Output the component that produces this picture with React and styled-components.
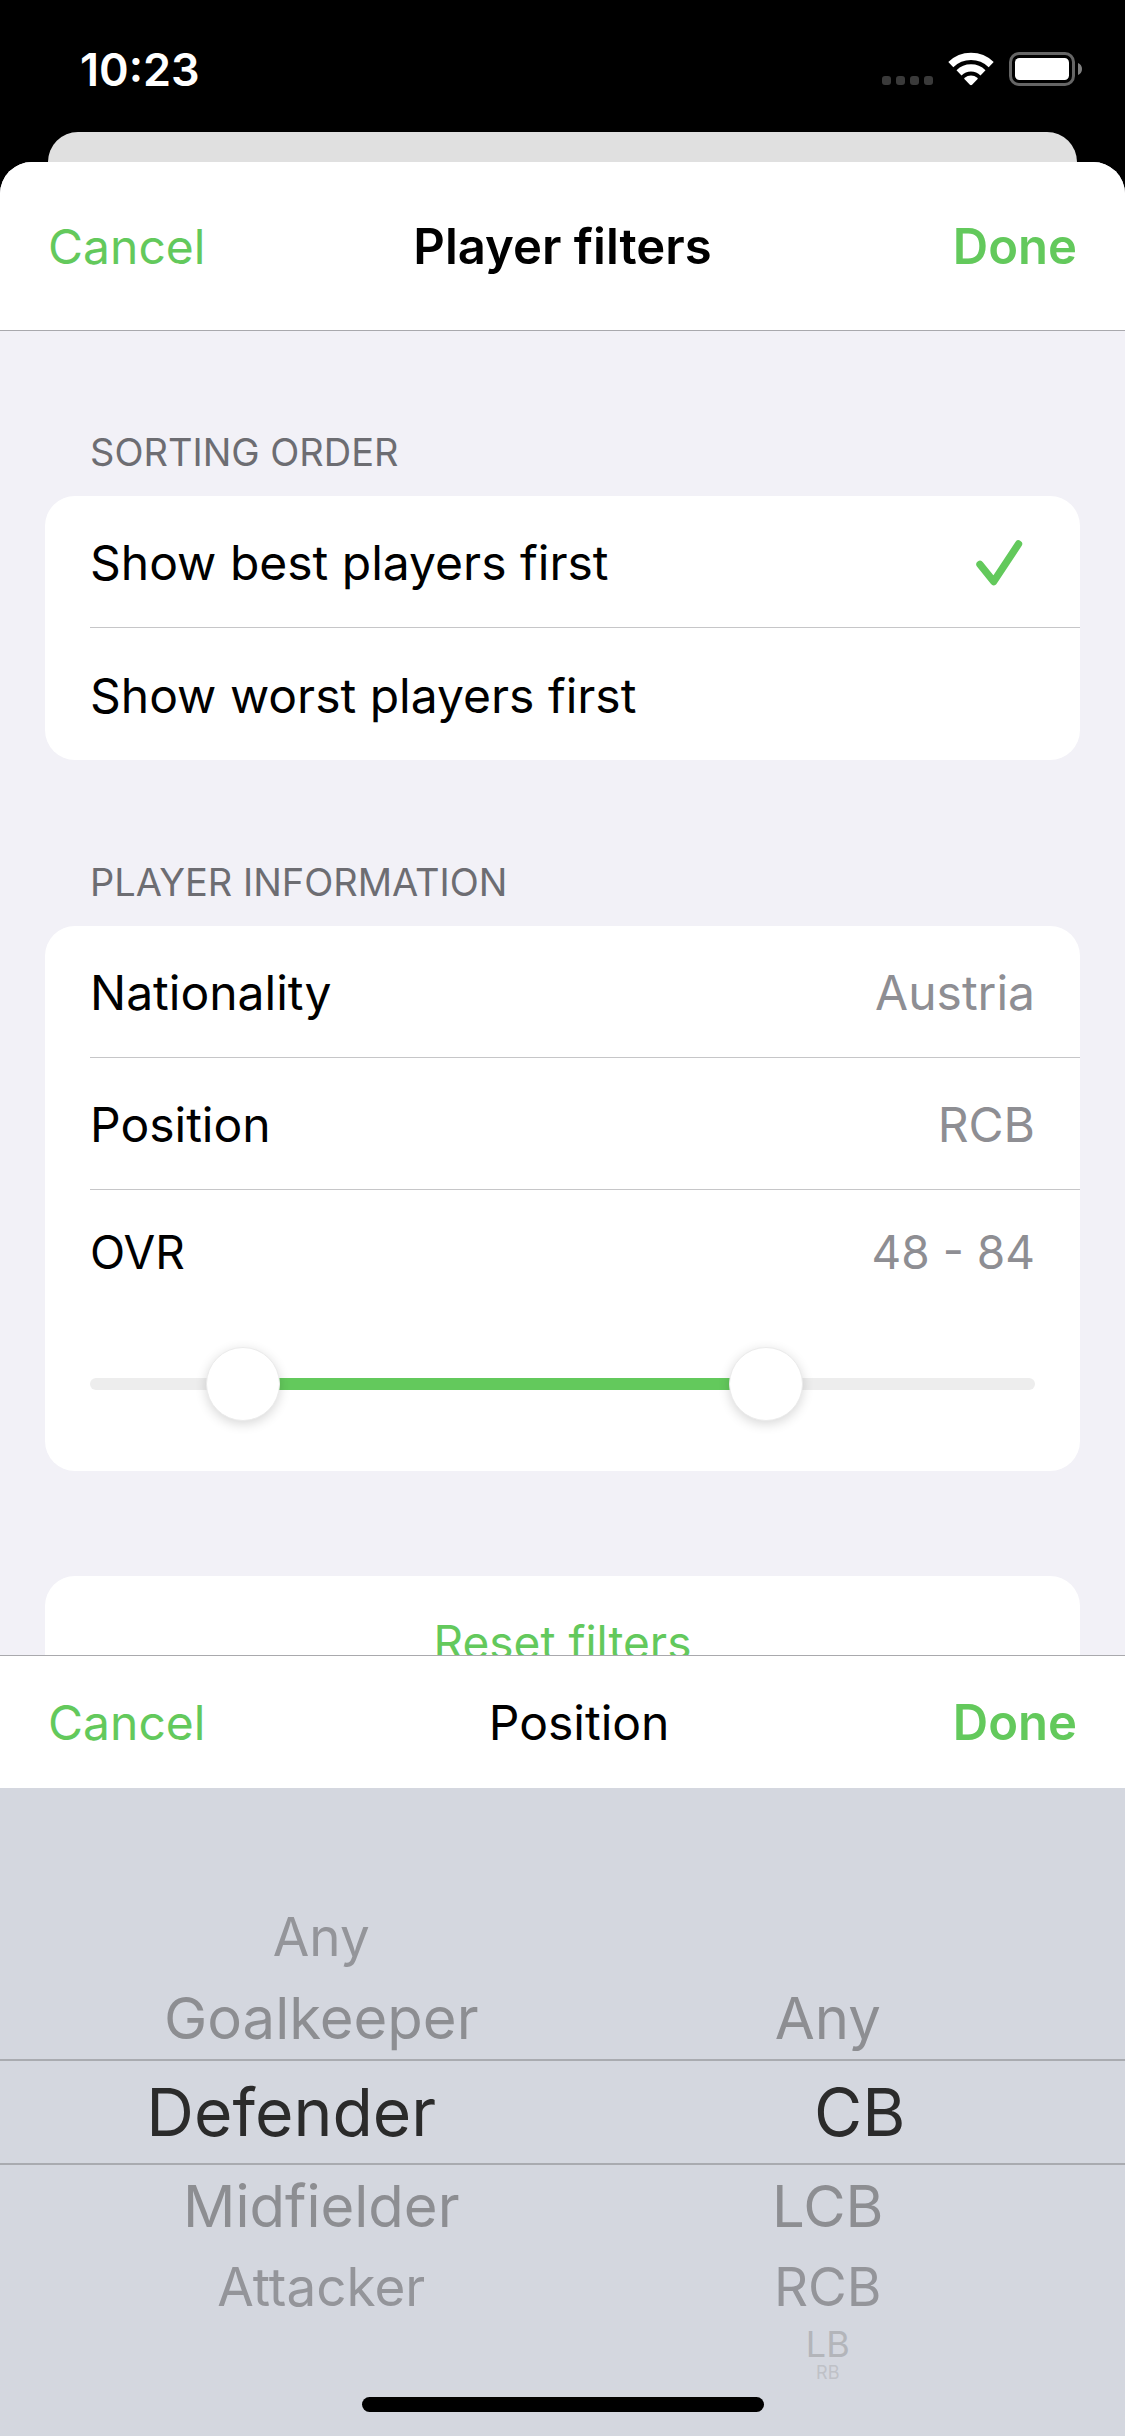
import React, { useState } from "react";
import styled, { createGlobalStyle, css } from "styled-components";

const color = {
  green: "#63c95c",
  ink: "#000",
  label: "#6d6d72",
  value: "#8e8e93",
  separator: "#c6c6c8",
  barLine: "#a9a9ad",
  grouped: "#f2f1f7",
  picker: "#d4d7df",
  pickerLine: "#a9abb0",
};

const size = { section: 38, small: 46, body: 48, strong: 49 };

const GlobalStyle = createGlobalStyle`
  *, *::before, *::after { box-sizing: border-box; }
  body {
    margin: 0;
    background: #000;
    font-family: Inter, "Liberation Sans", sans-serif;
    color: ${color.ink};
  }
  button, input, fieldset, legend {
    margin: 0;
    padding: 0;
    border: 0;
    background: none;
    font: inherit;
    color: inherit;
  }
  fieldset { min-width: 0; }
`;

const Screen = styled.div`
  position: relative;
  display: flex;
  flex-direction: column;
  height: 100vh;
  overflow: hidden;
  background: #000;
`;

const StatusBar = styled.header`
  flex: none;
  display: flex;
  align-items: center;
  justify-content: space-between;
  height: 132px;
  padding: 6px 43px 0 80px;
  color: #fff;
`;

const Clock = styled.time`
  font-size: 45px;
  font-weight: 600;
`;

const StatusIcons = styled.div`
  display: flex;
  align-items: center;
  gap: 15px;
`;

const BackSheet = styled.div`
  flex: none;
  height: 30px;
  margin: 0 48px;
  border-radius: 30px 30px 0 0;
  background: #e0e0e0;
`;

const Sheet = styled.main`
  flex: 1 1 0;
  min-height: 0;
  display: flex;
  flex-direction: column;
  overflow: hidden;
  border-radius: 32px 32px 0 0;
  background: ${color.grouped};
`;

const NavBar = styled.div`
  flex: none;
  display: grid;
  grid-template-columns: 1fr auto 1fr;
  align-items: center;
  height: 169px;
  padding: 0 48px;
  border-bottom: 1px solid ${color.barLine};
  background: #fff;
  font-size: ${size.body}px;
`;

const NavTitle = styled.h1`
  margin: 0;
  font-size: ${size.strong}px;
  font-weight: 600;
`;

const TextButton = styled.button`
  justify-self: ${(p) => (p.$primary ? "end" : "start")};
  font-size: ${(p) => (p.$primary ? size.strong : size.body)}px;
  font-weight: ${(p) => (p.$primary ? 600 : 400)};
  color: ${color.green};
  cursor: pointer;
`;

const Form = styled.div`
  flex: 1 1 0;
  min-height: 0;
  overflow-y: auto;
  scrollbar-width: none;
  padding: 98px 45px 0;
`;

const Section = styled.fieldset`
  margin-bottom: 99px;
`;

const SectionLabel = styled.legend`
  display: block;
  padding: 0 45px 21px;
  font-size: ${size.section}px;
  line-height: 46px;
  text-transform: uppercase;
  color: ${color.label};
`;

const Card = styled.div`
  overflow: hidden;
  border-radius: 30px;
  background: #fff;
  font-size: ${size.body}px;
`;

const rowLayout = css`
  display: flex;
  align-items: center;
  justify-content: space-between;
  width: calc(100% - 45px);
  height: 132px;
  margin-left: 45px;
  padding: 2px 45px 0 0;
  border-bottom: 1px solid ${color.separator};
  text-align: left;
  cursor: pointer;

  &:last-child {
    border-bottom: 0;
  }
`;

const ChoiceRow = styled.label`
  ${rowLayout}
`;

const FieldRow = styled.button`
  ${rowLayout}
`;

const Value = styled.span`
  color: ${color.value};
`;

const Radio = styled.input`
  appearance: none;
  width: 0;
  height: 0;
`;

const RangeRow = styled.div`
  display: flex;
  align-items: center;
  justify-content: space-between;
  height: 124px;
  padding: 0 45px;
  font-size: ${size.small}px;
`;

const RangeSlider = styled.div`
  display: grid;
  align-items: center;
  padding: 33px 45px 50px;
`;

const Track = styled.div`
  grid-area: 1 / 1;
  display: flex;
  height: 12px;
  padding: 0 37px;
  border-radius: 6px;
  background: #ededed;
`;

const Fill = styled.div`
  background: ${color.green};
`;

const thumb = css`
  appearance: none;
  width: 74px;
  height: 74px;
  border: 1px solid #ebebeb;
  border-radius: 50%;
  background: #fff;
  box-shadow: 0 3px 12px rgba(0, 0, 0, 0.16);
  pointer-events: auto;
  cursor: pointer;
`;

const RangeInput = styled.input`
  grid-area: 1 / 1;
  appearance: none;
  width: 100%;
  height: 74px;
  pointer-events: none;

  &::-webkit-slider-thumb {
    ${thumb}
  }
  &::-moz-range-thumb {
    ${thumb}
  }
`;

const ResetCard = styled(Card)`
  margin-top: 105px;
`;

const ResetButton = styled.button`
  width: 100%;
  height: 132px;
  font-size: ${size.small}px;
  color: ${color.green};
  cursor: pointer;
`;

const PickerPanel = styled.section`
  flex: none;
  background: ${color.picker};
`;

const Toolbar = styled.div`
  display: flex;
  align-items: center;
  justify-content: space-between;
  height: 133px;
  padding: 0 48px;
  border-top: 1px solid ${color.barLine};
  background: #fff;
  font-size: ${size.body}px;
`;

const Wheels = styled.div`
  display: grid;
  grid-template-columns: 1fr 1fr;
  padding: 51px 0;
`;

const Wheel = styled.fieldset`
  display: grid;
  grid-template-rows: 24px 34px 80px 82px 106px 82px 80px 34px 24px;
`;

const wheelSteps = [
  { font: 66, tone: "#2b2b2b" },
  { font: 58, tone: "#8d8e92" },
  { font: 53, tone: "#94959a" },
  { font: 36, tone: "#b3b5ba" },
  { font: 18, tone: "#bfc1c7" },
];

const WheelItem = styled.label`
  grid-row: ${(p) => 5 + p.$offset};
  display: flex;
  align-items: center;
  justify-content: center;
  padding: ${(p) => (p.$side === "left" ? "0 0 0 80px" : "0 32px 0 0")};
  font-size: ${(p) => wheelSteps[Math.abs(p.$offset)].font}px;
  line-height: 1;
  color: ${(p) => wheelSteps[Math.abs(p.$offset)].tone};
  cursor: pointer;

  ${(p) =>
    p.$offset === 0 &&
    css`
      padding: ${p.$side === "left" ? "0 0 0 20px" : "0 0 0 32px"};
      border: solid ${color.pickerLine};
      border-width: 2px 0;
    `}
`;

const HomeIndicator = styled.div`
  position: absolute;
  bottom: 24px;
  left: 50%;
  width: 402px;
  height: 15px;
  margin-left: -201px;
  border-radius: 8px;
  background: #000;
`;

function SignalDots() {
  return (
    <svg width="51" height="34" viewBox="0 0 51 34" fill="#3a3a3a" aria-hidden="true">
      {[0, 14, 28, 42].map((x) => (
        <rect key={x} x={x} y="24" width="9" height="9" rx="3" />
      ))}
    </svg>
  );
}

function WifiIcon() {
  return (
    <svg width="46" height="34" viewBox="0 0 46 34" aria-hidden="true">
      <g fill="none" stroke="#fff" strokeWidth="7.2">
        <path d="M2.8 12.6a29 29 0 0 1 40.4 0" />
        <path d="M11 20.8a17.3 17.3 0 0 1 24 0" />
      </g>
      <path
        fill="#fff"
        d="M23 33.2c-.4 0-.8-.2-1.1-.5l-5.3-5.4c-.5-.5-.4-1.2.1-1.6a10.2 10.2 0 0 1 12.6 0c.5.4.6 1.1.1 1.6l-5.3 5.4c-.3.3-.7.5-1.1.5z"
      />
    </svg>
  );
}

function BatteryIcon() {
  return (
    <svg width="73" height="34" viewBox="0 0 73 34" aria-hidden="true">
      <rect x="1.5" y="1.5" width="63" height="31" rx="8.5" fill="none" stroke="#666" strokeWidth="3" />
      <rect x="6" y="6" width="54" height="22" rx="4.5" fill="#fff" />
      <path d="M69 11c2.5.9 4 3.200 4 6s-1.5 5.100-4 6z" fill="#808080" />
    </svg>
  );
}

function CheckIcon() {
  return (
    <svg width="60" height="46" viewBox="0 0 60 46" fill="none" aria-hidden="true">
      <path
        d="M5 24.5 18.7 41.5 43.5 4"
        stroke={color.green}
        strokeWidth="7.4"
        strokeLinecap="round"
        strokeLinejoin="round"
      />
    </svg>
  );
}

function WheelPicker({ name, side, options, selected, onSelect }) {
  return (
    <Wheel aria-label={name}>
      {options.map((option, index) => {
        const offset = index - selected;
        if (Math.abs(offset) > 4) return null;
        return (
          <WheelItem key={option} $side={side} $offset={offset}>
            <Radio
              type="radio"
              name={name}
              checked={offset === 0}
              onChange={() => onSelect(index)}
            />
            {option}
          </WheelItem>
        );
      })}
    </Wheel>
  );
}

const RANGE_MIN = 40;
const RANGE_MAX = 100;
const share = (from, to) => `${((to - from) / (RANGE_MAX - RANGE_MIN)) * 100}%`;

const orders = ["Show best players first", "Show worst players first"];
const lines = ["Any", "Goalkeeper", "Defender", "Midfielder", "Attacker"];
const positions = ["Any", "CB", "LCB", "RCB", "LB", "RB"];

export default function App() {
  const [order, setOrder] = useState(0);
  const [low, setLow] = useState(48);
  const [high, setHigh] = useState(84);
  const [line, setLine] = useState(2);
  const [position, setPosition] = useState(1);

  return (
    <Screen>
      <GlobalStyle />
      <StatusBar>
        <Clock>10:23</Clock>
        <StatusIcons>
          <SignalDots />
          <WifiIcon />
          <BatteryIcon />
        </StatusIcons>
      </StatusBar>
      <BackSheet />
      <Sheet>
        <NavBar>
          <TextButton type="button">Cancel</TextButton>
          <NavTitle>Player filters</NavTitle>
          <TextButton type="button" $primary>
            Done
          </TextButton>
        </NavBar>

        <Form>
          <Section>
            <SectionLabel>Sorting order</SectionLabel>
            <Card>
              {orders.map((text, index) => (
                <ChoiceRow key={text}>
                  <span>
                    <Radio
                      type="radio"
                      name="order"
                      checked={order === index}
                      onChange={() => setOrder(index)}
                    />
                    {text}
                  </span>
                  {order === index && <CheckIcon />}
                </ChoiceRow>
              ))}
            </Card>
          </Section>

          <Section>
            <SectionLabel>Player information</SectionLabel>
            <Card>
              <FieldRow type="button">
                Nationality <Value>Austria</Value>
              </FieldRow>
              <FieldRow type="button">
                Position <Value>RCB</Value>
              </FieldRow>
              <RangeRow>
                <span>OVR</span>
                <Value>
                  {low} - {high}
                </Value>
              </RangeRow>
              <RangeSlider>
                <Track>
                  <Fill
                    style={{
                      marginLeft: share(RANGE_MIN, low),
                      width: share(low, high),
                    }}
                  />
                </Track>
                <RangeInput
                  type="range"
                  aria-label="Lowest OVR"
                  min={RANGE_MIN}
                  max={RANGE_MAX}
                  value={low}
                  onChange={(e) => setLow(Math.min(Number(e.target.value), high))}
                />
                <RangeInput
                  type="range"
                  aria-label="Highest OVR"
                  min={RANGE_MIN}
                  max={RANGE_MAX}
                  value={high}
                  onChange={(e) => setHigh(Math.max(Number(e.target.value), low))}
                />
              </RangeSlider>
            </Card>
            <ResetCard>
              <ResetButton type="button">Reset filters</ResetButton>
            </ResetCard>
          </Section>
        </Form>

        <PickerPanel>
          <Toolbar>
            <TextButton type="button">Cancel</TextButton>
            <span>Position</span>
            <TextButton type="button" $primary>
              Done
            </TextButton>
          </Toolbar>
          <Wheels>
            <WheelPicker
              name="Line"
              side="left"
              options={lines}
              selected={line}
              onSelect={setLine}
            />
            <WheelPicker
              name="Position"
              side="right"
              options={positions}
              selected={position}
              onSelect={setPosition}
            />
          </Wheels>
        </PickerPanel>
      </Sheet>
      <HomeIndicator />
    </Screen>
  );
}
